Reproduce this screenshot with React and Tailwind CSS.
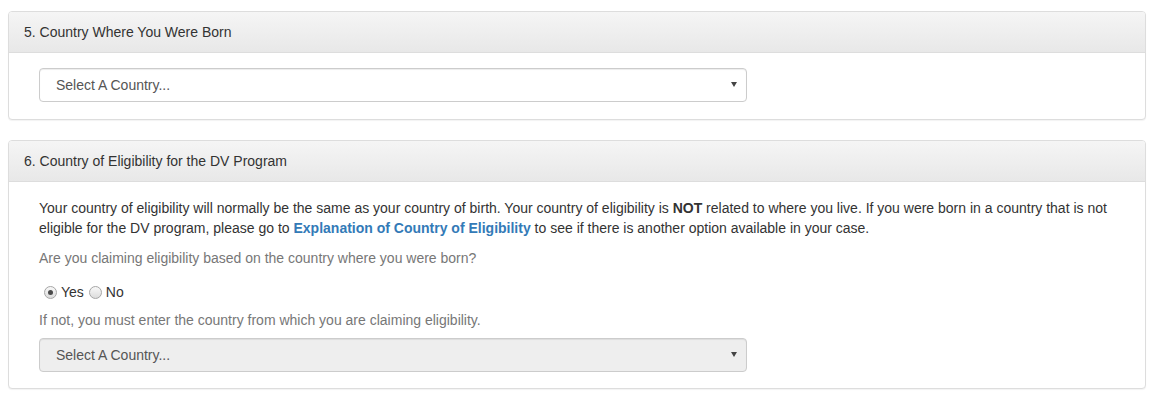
import React, { useState } from 'react';

const SelectBox = ({ disabled }) => (
  <div
    className={`relative w-[708px] h-[34px] border border-[#ccc] rounded-[4px] shadow-[inset_0_1px_1px_rgba(0,0,0,0.075)] flex items-center pl-[16px] text-[14px] text-[#555] ${
      disabled ? 'bg-[#eee]' : 'bg-white'
    }`}
  >
    Select A Country...
    <span className="absolute right-[9px] top-[13px] w-0 h-0 border-l-[3px] border-r-[3px] border-t-[5px] border-l-transparent border-r-transparent border-t-[#444]" />
  </div>
);

const Panel = ({ title, children }) => (
  <div className="mb-[20px] bg-white border border-[#ddd] rounded-[4px] shadow-[0_1px_1px_rgba(0,0,0,0.05)]">
    <div className="px-[15px] py-[10px] leading-[20px] text-[14px] text-[#333] border-b border-[#ddd] rounded-t-[3px] bg-[linear-gradient(to_bottom,#f5f5f5_0%,#e8e8e8_100%)]">
      {title}
    </div>
    <div className="p-[15px]">{children}</div>
  </div>
);

const Radio = ({ checked, onClick }) => (
  <span
    onClick={onClick}
    className="inline-flex items-center justify-center w-[13px] h-[13px] rounded-full border border-[#a6a6a6] bg-[linear-gradient(to_bottom,#f8f8f8,#dcdcdc)] align-middle cursor-pointer"
  >
    {checked && <span className="w-[5px] h-[5px] rounded-full bg-[#4a4a4a]" />}
  </span>
);

export default function App() {
  const [bornHere, setBornHere] = useState(true);

  return (
    <div
      className="bg-white min-h-[402px] px-[8px] pt-[11px] text-[14px] leading-[20px] text-[#333]"
      style={{ fontFamily: '"Liberation Sans", Arial, Helvetica, sans-serif' }}
    >
      {/* Question 5 */}
      <Panel title="5. Country Where You Were Born">
        <div className="px-[15px] pb-[2px]">
          <SelectBox />
        </div>
      </Panel>

      {/* Question 6 */}
      <Panel title="6. Country of Eligibility for the DV Program">
        <div className="px-[15px] pb-[1px]">
          <p className="mb-[10px] pt-[1px]">
            Your country of eligibility will normally be the same as your country of birth. Your country of
            eligibility is <strong className="font-bold">NOT</strong> related to where you live. If you were born in
            a country that is not eligible for the DV program, please go to{' '}
            <a href="#" className="font-bold text-[#337ab7]">
              Explanation of Country of Eligibility
            </a>{' '}
            to see if there is another option available in your case.
          </p>
          <p className="mb-[14px] text-[#777]">Are you claiming eligibility based on the country where you were born?</p>
          <div className="flex items-center mb-[8px] pl-[5px]">
            <Radio checked={bornHere} onClick={() => setBornHere(true)} />
            <span className="ml-[4px] mr-[5px]">Yes</span>
            <Radio checked={!bornHere} onClick={() => setBornHere(false)} />
            <span className="ml-[4px]">No</span>
          </div>
          <p className="mb-[8px] text-[#777]">If not, you must enter the country from which you are claiming eligibility.</p>
          <SelectBox disabled />
        </div>
      </Panel>
    </div>
  );
}
